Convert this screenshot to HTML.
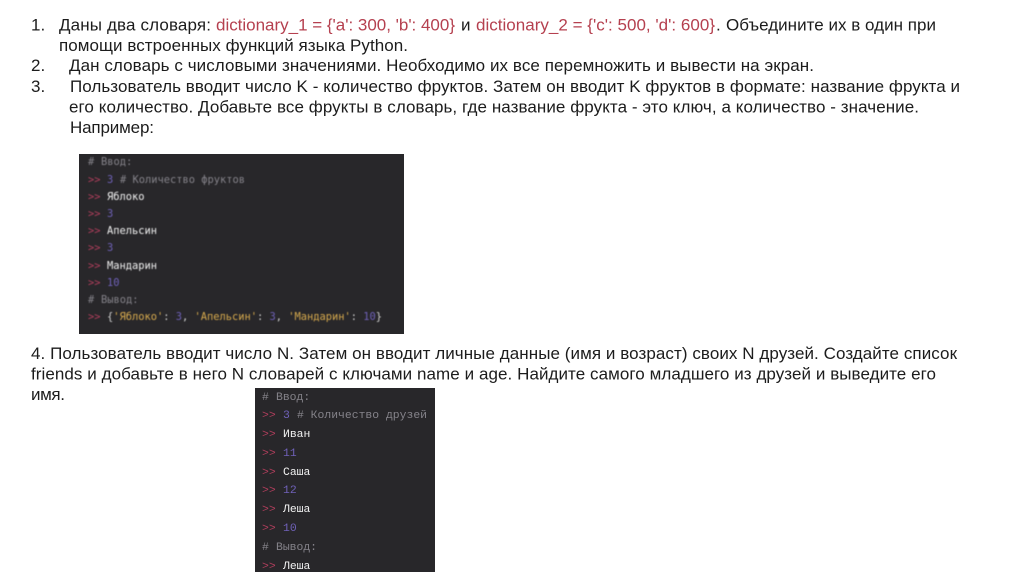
<!DOCTYPE html>
<html lang="ru">
<head>
<meta charset="utf-8">
<title>Задачи</title>
<style>
html,body{margin:0;padding:0;background:#fff;width:1024px;height:574px;overflow:hidden}
svg{display:block;position:absolute;left:0;top:0}
.t{font-family:"Liberation Sans",sans-serif;font-size:17px;fill:#1c1c1c}
.r{fill:#b5404f}
.m{font-family:"DejaVu Sans Mono","Liberation Mono",monospace;font-size:10.4px}
.n{font-family:"Liberation Mono","DejaVu Sans Mono",monospace;font-size:11.4px}
.c{fill:#85838a}.p{fill:#b03e5c}.u{fill:#6f61b8}.w{fill:#f2f2f2}.y{fill:#d8ab4e}.g{fill:#cfcfcf}
.b{filter:blur(.4px)}
.n2{filter:blur(.3px)}
</style>
</head>
<body>
<svg width="1024" height="574" viewBox="0 0 1024 574" xmlns="http://www.w3.org/2000/svg">
<rect width="1024" height="574" fill="#fff"/>
<g class="t" style="filter:blur(.2px)">
<text x="31" y="30.5">1.</text>
<text x="59" y="30.5" textLength="152">Даны два словаря:</text>
<text class="r" x="216" y="30.5" textLength="239">dictionary_1 = {'a': 300, 'b': 400}</text>
<text x="461" y="30.5">и</text>
<text class="r" x="476" y="30.5" textLength="239">dictionary_2 = {'c': 500, 'd': 600}</text>
<text x="716" y="30.5">.</text>
<text x="726" y="30.5" textLength="210">Объедините их в один при</text>
<text x="59" y="51" textLength="349">помощи встроенных функций языка Python.</text>
<text x="31" y="71">2.</text>
<text x="69" y="71" textLength="745">Дан словарь с числовыми значениями. Необходимо их все перемножить и вывести на экран.</text>
<text x="31" y="92">3.</text>
<text x="70" y="92" textLength="890">Пользователь вводит число K - количество фруктов. Затем он вводит K фруктов в формате: название фрукта и</text>
<text x="69" y="112.5" textLength="850">его количество. Добавьте все фрукты в словарь, где название фрукта - это ключ, а количество - значение.</text>
<text x="70" y="133" textLength="84">Например:</text>
<text x="31" y="359" textLength="926">4. Пользователь вводит число N. Затем он вводит личные данные (имя и возраст) своих N друзей. Создайте список</text>
<text x="31" y="379.5" textLength="905">friends и добавьте в него N словарей с ключами name и age. Найдите самого младшего из друзей и выведите его</text>
<text x="31" y="400" textLength="34">имя.</text>
</g>

<rect x="79" y="154" width="325" height="180" fill="#28272a"/>
<g class="m b">
<text class="c" x="88" y="165">#</text><text class="c" x="101" y="165">Ввод:</text>
<text class="p" x="88" y="183">&gt;&gt;</text><text class="u" x="107" y="183">3</text><text class="c" x="120" y="183" textLength="125"># Количество фруктов</text>
<text class="p" x="88" y="200">&gt;&gt;</text><text class="w" x="107" y="200">Яблоко</text>
<text class="p" x="88" y="217">&gt;&gt;</text><text class="u" x="107" y="217">3</text>
<text class="p" x="88" y="234">&gt;&gt;</text><text class="w" x="107" y="234">Апельсин</text>
<text class="p" x="88" y="251">&gt;&gt;</text><text class="u" x="107" y="251">3</text>
<text class="p" x="88" y="269">&gt;&gt;</text><text class="w" x="107" y="269">Мандарин</text>
<text class="p" x="88" y="286">&gt;&gt;</text><text class="u" x="107" y="286">10</text>
<text class="c" x="88" y="303">#</text><text class="c" x="101" y="303">Вывод:</text>
<text class="p" x="88" y="320">&gt;&gt;</text>
<text x="107" y="320" textLength="275"><tspan class="g">{</tspan><tspan class="y">'Яблоко'</tspan><tspan class="g">: </tspan><tspan class="u">3</tspan><tspan class="g">, </tspan><tspan class="y">'Апельсин'</tspan><tspan class="g">: </tspan><tspan class="u">3</tspan><tspan class="g">, </tspan><tspan class="y">'Мандарин'</tspan><tspan class="g">: </tspan><tspan class="u">10</tspan><tspan class="g">}</tspan></text>
</g>

<rect x="255" y="388" width="180" height="184" fill="#28272a"/>
<g class="n n2">
<text class="c" x="262" y="400">#</text><text class="c" x="276" y="400">Ввод:</text>
<text class="p" x="262" y="418">&gt;&gt;</text><text class="u" x="283" y="418">3</text><text class="c" x="297" y="418" textLength="130"># Количество друзей</text>
<text class="p" x="262" y="437">&gt;&gt;</text><text class="w" x="283" y="437">Иван</text>
<text class="p" x="262" y="456">&gt;&gt;</text><text class="u" x="283" y="456">11</text>
<text class="p" x="262" y="475">&gt;&gt;</text><text class="w" x="283" y="475">Саша</text>
<text class="p" x="262" y="493">&gt;&gt;</text><text class="u" x="283" y="493">12</text>
<text class="p" x="262" y="512">&gt;&gt;</text><text class="w" x="283" y="512">Леша</text>
<text class="p" x="262" y="531">&gt;&gt;</text><text class="u" x="283" y="531">10</text>
<text class="c" x="262" y="550">#</text><text class="c" x="276" y="550">Вывод:</text>
<text class="p" x="262" y="569">&gt;&gt;</text><text class="w" x="283" y="569">Леша</text>
</g>
</svg>
</body>
</html>
